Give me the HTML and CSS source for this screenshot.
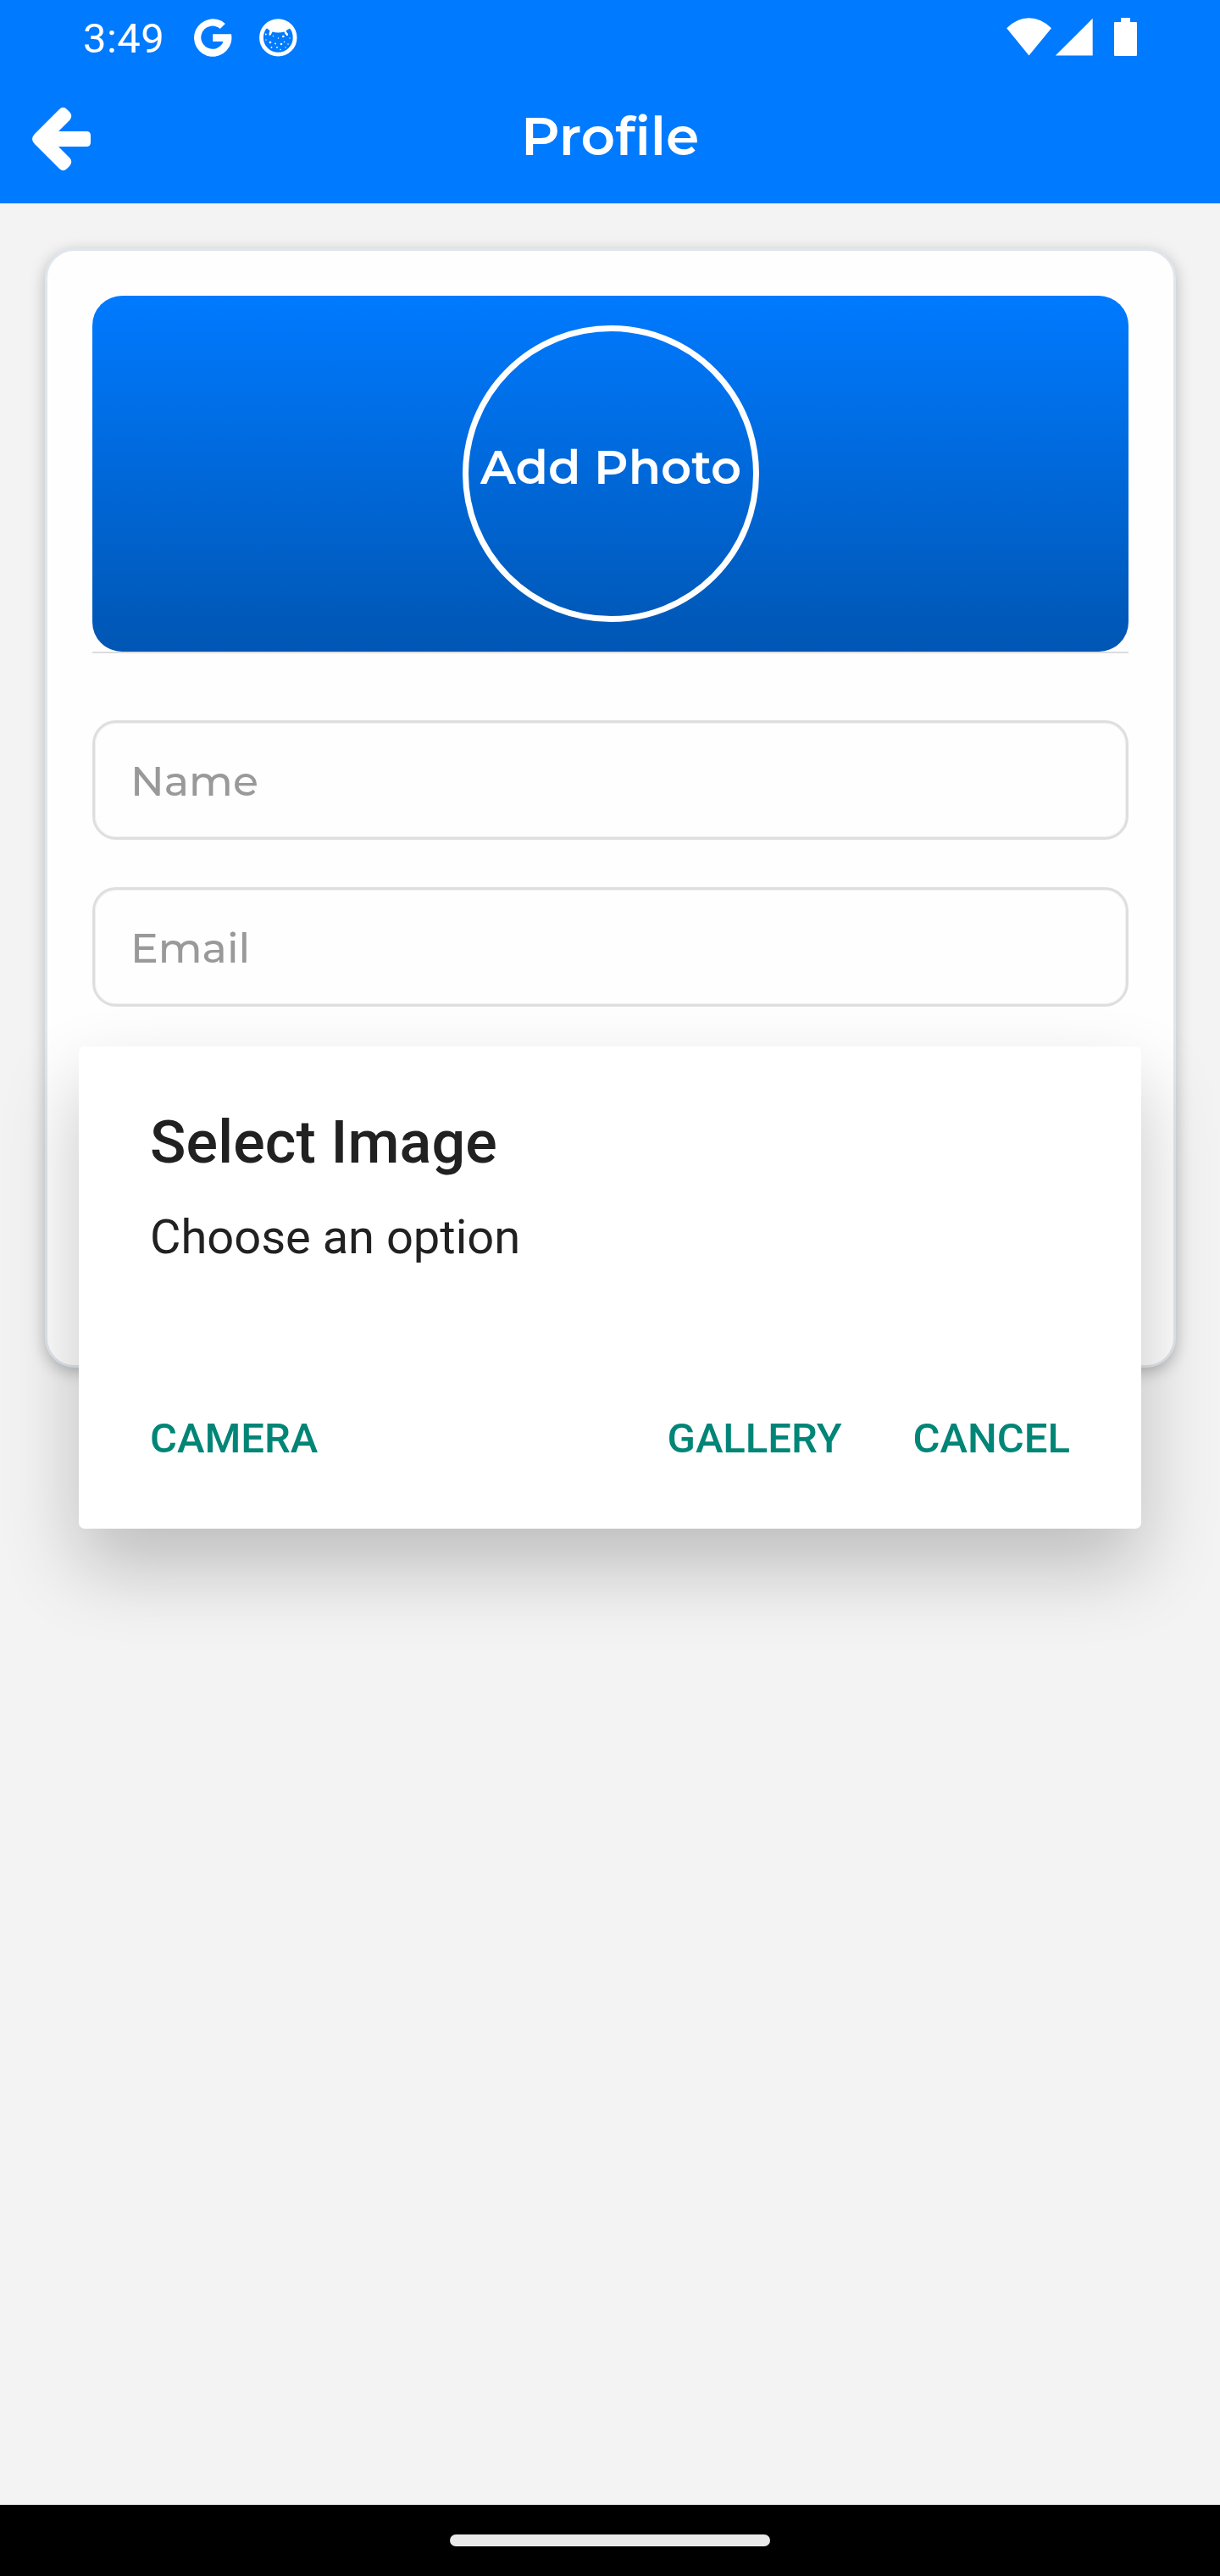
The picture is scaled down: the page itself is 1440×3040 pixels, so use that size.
FILE: index.html
```html
<!DOCTYPE html>
<html lang="en">
<head>
<meta charset="utf-8">
<title>Profile</title>
<link rel="stylesheet" href="styles.css">
</head>
<body>
<div class="screen">
  <header class="header">
    <div class="status-bar">
      <span class="clock">3:49</span>
      <svg class="icon-google" width="46" height="46" viewBox="228 21 46 46"><path d="M265.9 27.9A22.2 22.2 0 1 0 273 40.2H251.2V49H263.6A13.6 13.6 0 1 1 259.8 33.9Z"/></svg>
      <svg class="icon-cat" width="46" height="46" viewBox="305 21 46 46">
        <circle class="ring" cx="328.3" cy="44.4" r="19.8"/>
        <path d="M313 32Q320 24 328.3 24T343.5 32L341.5 34Q338 35 337.5 37L340 40Q340.500 42.500 338.500 42.200Q336 40 335.500 37.500Q328 39.500 321.500 37.500L319.500 41.500Q317 43 317.500 39.500L318.500 36.500Q317 34.500 315 33.500Z"/>
        <g><circle cx="319" cy="50" r="1.300"/><circle cx="334.300" cy="43" r="1.300"/><circle cx="332" cy="52" r="1.300"/><circle cx="313.800" cy="40.500" r=".9"/><circle cx="322.500" cy="42.500" r=".8"/><circle cx="328.500" cy="45" r=".7"/><circle cx="325" cy="51.500" r=".9"/><circle cx="335.500" cy="49.500" r=".8"/><circle cx="320.500" cy="56" r=".9"/><circle cx="331" cy="58.500" r=".8"/><circle cx="327" cy="56" r=".9"/><circle cx="340" cy="52" r=".8"/><circle cx="342" cy="45" r=".7"/><circle cx="314" cy="47" r=".7"/><circle cx="337" cy="56" r=".7"/></g>
      </svg>
      <svg class="icon-signal" width="156" height="46" viewBox="1187 21 156 46">
        <path d="M1188.200 33.300Q1200 21.300 1214.500 21.300T1241 33.300L1214.500 65.400Z"/>
        <path d="M1245.800 65.600L1289.700 21.700V65.600Z"/>
        <path d="M1323 21H1334V26H1341Q1342 26 1342 27V65Q1342 66 1341 66H1316Q1315 66 1315 65V27Q1315 26 1316 26H1323Z"/>
      </svg>
    </div>
    <div class="app-bar">
      <svg class="icon-back" width="72" height="78" viewBox="37 125 72 78"><path d="M70 129Q74.500 124.500 79 129L82.500 132.500Q86 137 82.500 141.500L69 155H102Q107 155 107 160V168Q107 173 102 173H69L82.500 186.500Q86 191 82.500 195.500L79 199Q74.500 203.500 70 199L41 170Q35 164 41 158Z"/></svg>
      <h1 class="title">Profile</h1>
    </div>
  </header>
  <main class="content">
    <section class="card">
      <div class="banner"><div class="avatar"><span class="avatar-label">Add Photo</span></div></div>
      <div class="field"><span class="placeholder">Name</span></div>
      <div class="field"><span class="placeholder">Email</span></div>
    </section>
  </main>
  <nav class="nav-bar"><div class="home-pill"></div></nav>
  <div class="dialog" role="dialog">
    <h2 class="dialog-title">Select Image</h2>
    <p class="dialog-message">Choose an option</p>
    <div class="actions">
      <span class="action">CAMERA</span>
      <span class="action action-gallery">GALLERY</span>
      <span class="action">CANCEL</span>
    </div>
  </div>
</div>
</body>
</html>
```
FILE: styles.css
```css
* { box-sizing: border-box; margin: 0; padding: 0; }
body { font-family: Roboto, sans-serif; }
svg { display: block; flex: none; fill: #fff; }

.screen {
  position: relative;
  display: flex;
  flex-direction: column;
  width: 1440px;
  height: 3040px;
  overflow: hidden;
  background: #f3f3f3;
}

.header { height: 239.5px; background: #007aff; color: #fff; }
.status-bar { display: flex; align-items: center; height: 88px; padding: 0 97px 0 98px; }
.clock { width: 130px; padding-top: 4px; font-size: 49px; line-height: 58px; letter-spacing: .4px; }
.icon-cat { margin-left: 31px; }
.icon-cat .ring { fill: none; stroke: #fff; stroke-width: 4.800; }
.icon-signal { margin-left: auto; }
.app-bar { display: flex; align-items: center; height: 152px; padding: 0 37px; }
.title {
  flex: 1;
  margin-right: 72px;
  padding-bottom: 6px;
  text-align: center;
  font: 600 63px/74px Montserrat, Inter, sans-serif;
}

.content { flex: 1; padding: 53.5px 52.5px; }
.card {
  height: 1321px;
  padding: 53px 52.500px 53px 53.500px;
  border: 3px solid #dfe6ec;
  border-radius: 35px;
  background: #fefefe;
  box-shadow: 0 5px 18px rgba(0, 0, 0, .25);
}
.banner {
  position: relative;
  display: flex;
  justify-content: center;
  align-items: center;
  height: 420px;
  margin-bottom: 81px;
  border-radius: 35px;
  background: linear-gradient(#007aff, #0056b3);
}
.banner::after {
  content: "";
  position: absolute;
  inset: 420px 0 auto;
  height: 2px;
  background: #dcdcdc;
}
.avatar {
  display: flex;
  justify-content: center;
  align-items: center;
  width: 350px;
  height: 350px;
  margin-left: 1px;
  padding-bottom: 16px;
  border: 7px solid #fff;
  border-radius: 50%;
}
.avatar-label { color: #fff; white-space: nowrap; font: 600 56px/66px Montserrat, Inter, sans-serif; }
.field {
  display: flex;
  align-items: center;
  height: 141px;
  margin-bottom: 56px;
  padding: 2px 42px 0;
  border: 3px solid #dedede;
  border-radius: 28px;
  box-shadow: inset 0 0 0 1px #f0f0f0;
}
.placeholder { color: #999; font: 500 49px/58px Montserrat, Inter, sans-serif; }

.nav-bar { height: 84px; padding-top: 35px; background: #000; }
.home-pill { width: 378px; height: 14px; margin: 0 auto; border-radius: 7px; background: #eaeaea; }

.dialog {
  position: absolute;
  top: 1235px;
  left: 93px;
  width: 1254px;
  height: 569px;
  padding: 72px 84px 0;
  border-radius: 7px;
  background: #fff;
  color: #212121;
  box-shadow: 0 45px 90px rgba(0, 0, 0, .225);
}
.dialog-title { font-size: 70px; font-weight: 500; line-height: 82px; letter-spacing: .15px; }
.dialog-message { margin-top: 38px; font-size: 56px; line-height: 66px; }
.actions { display: flex; margin-top: 176px; gap: 84px; }
.action { color: #008577; font-size: 49px; font-weight: 500; line-height: 58px; }
.action-gallery { margin-left: auto; }
```
